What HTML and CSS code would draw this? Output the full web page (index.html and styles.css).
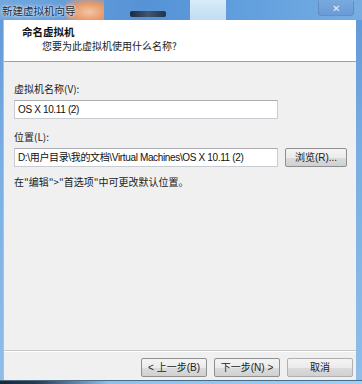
FILE: index.html
```html
<!DOCTYPE html>
<html>
<head>
<meta charset="utf-8">
<link rel="stylesheet" href="styles.css">
</head>
<body>
<div class="window">
  <div class="titlebar">
    <span class="title">新建虚拟机向导</span>
    <span class="blob orange"></span>
    <span class="blob dark"></span>
    <span class="blob light"></span>
    <span class="close">✕</span>
  </div>
  <div class="client">
    <div class="header">
      <div class="h-title">命名虚拟机</div>
      <div class="h-sub">您要为此虚拟机使用什么名称?</div>
    </div>
    <div class="body">
      <div class="label first">虚拟机名称(V):</div>
      <div class="row"><div class="input">OS X 10.11 (2)</div></div>
      <div class="label second">位置(L):</div>
      <div class="row">
        <div class="input">D:\用户目录\我的文档\Virtual Machines\OS X 10.11 (2)</div>
        <div class="btn browse">浏览(R)...</div>
      </div>
      <div class="hint">在"编辑"&gt;"首选项"中可更改默认位置。</div>
    </div>
    <div class="footer">
      <div class="btn">&lt; 上一步(B)</div>
      <div class="btn">下一步(N) &gt;</div>
      <div class="btn cancel">取消</div>
    </div>
  </div>
</div>
</body>
</html>
```
FILE: styles.css
```css
html, body { margin: 0; padding: 0; }
body {
  width: 362px; height: 384px; overflow: hidden;
  font-family: "Noto Sans CJK SC", "Liberation Sans", sans-serif;
  font-size: 10px; color: #1e1e1e;
  background: linear-gradient(90deg, #1c2630 0%, #2a3a4a 10%, #8fc0e8 30%, #9fd0ee 100%);
}
.window {
  width: 362px; height: 381px;
  background: linear-gradient(180deg, #5f97d6 0%, #79aee4 40%, #8ebde9 100%);
  display: flex; flex-direction: column;
  box-sizing: border-box;
  padding: 0 6px 0 3px;
  border-bottom: 1px solid #4a6c8c;
}
.titlebar {
  height: 20px; position: relative;
  display: flex; align-items: center;
  background: linear-gradient(90deg, #72a8de 0%, #5592d6 40%, #62a0de 70%, #78ade2 100%);
  margin: 0 -6px 0 -3px;
  padding-left: 2px;
  overflow: hidden;
}
.title {
  font-size: 10.5px; color: #1a2a3a; position: relative; z-index: 2;
  text-shadow: 0 0 4px #e8f0f8, 0 0 2px #fff;
}
.blob { position: absolute; z-index: 1; }
.orange {
  left: 66px; top: 0; width: 38px; height: 20px;
  background: radial-gradient(ellipse at 60% 60%, #f4c6a4 0%, #e89a6a 50%, rgba(230,150,110,0) 100%);
}
.dark {
  left: 130px; top: 11px; width: 36px; height: 6px;
  background: linear-gradient(90deg, #1a2a3c, #3f5670, #20324a);
  border-radius: 2px;
}
.light {
  left: 190px; top: 0; width: 36px; height: 20px;
  background: linear-gradient(180deg, #d8ecfa, #c2dcf2);
}
.close {
  position: absolute; right: 8px; top: 1px;
  width: 36px; height: 15px; box-sizing: border-box;
  border: 1px solid rgba(80,120,170,0.5); border-top: 0;
  border-radius: 0 0 4px 4px;
  background: linear-gradient(180deg, #7aa8dc, #6a9bd6);
  color: #e8eef6; font-size: 10px; text-align: center; line-height: 14px;
  z-index: 2;
}
.client {
  flex: 1; display: flex; flex-direction: column;
  background: #f0f0f0;
  border-left: 1px solid #a8c0d8;
}
.header {
  background: #ffffff;
  border-bottom: 1px solid #a0a0a0;
  padding: 5px 0 0 18px; box-sizing: border-box;
  height: 42px;
}
.h-title { font-weight: bold; font-size: 10.5px; line-height: 14px; color: #111; }
.h-sub { font-size: 10px; line-height: 14px; padding-left: 20px; color: #222; }
.body { flex: 1; padding: 0 0 0 10px; display: flex; flex-direction: column; }
.label { font-size: 10px; line-height: 14px; margin-bottom: 4px; color: #222; }
.label.first { margin-top: 20px; }
.label.second { margin-top: 11px; }
.row { display: flex; align-items: center; gap: 7px; }
.input {
  width: 264px; height: 19px; box-sizing: border-box;
  background: #fff; border: 1px solid #c8ccd2; border-top-color: #abadb3;
  font-family: "Liberation Sans", "Noto Sans CJK SC", sans-serif;
  font-size: 10px; letter-spacing: -0.35px; line-height: 17px; padding-left: 3px; white-space: nowrap; overflow: hidden;
  color: #111;
}
.btn {
  height: 19px; box-sizing: border-box; width: 66px;
  border: 1px solid #8e8f8f; border-radius: 2px;
  background: linear-gradient(180deg, #f4f4f4 0%, #ebebeb 50%, #dcdcdc 51%, #d0d0d0 100%);
  font-size: 10px; line-height: 17px; text-align: center; color: #222;
  font-family: "Liberation Sans", "Noto Sans CJK SC", sans-serif;
}
.browse { width: 62px; }
.hint { font-size: 10px; line-height: 14px; margin-top: 8px; color: #222; }
.footer {
  height: 30px; border-top: 1px solid #c8c8c8;
  box-shadow: inset 0 1px 0 #fff;
  display: flex; justify-content: flex-end; align-items: center; gap: 7px;
  padding-right: 3px; padding-top: 3px; box-sizing: border-box;
}
.cancel { border-color: #b0b0b0; }
```
